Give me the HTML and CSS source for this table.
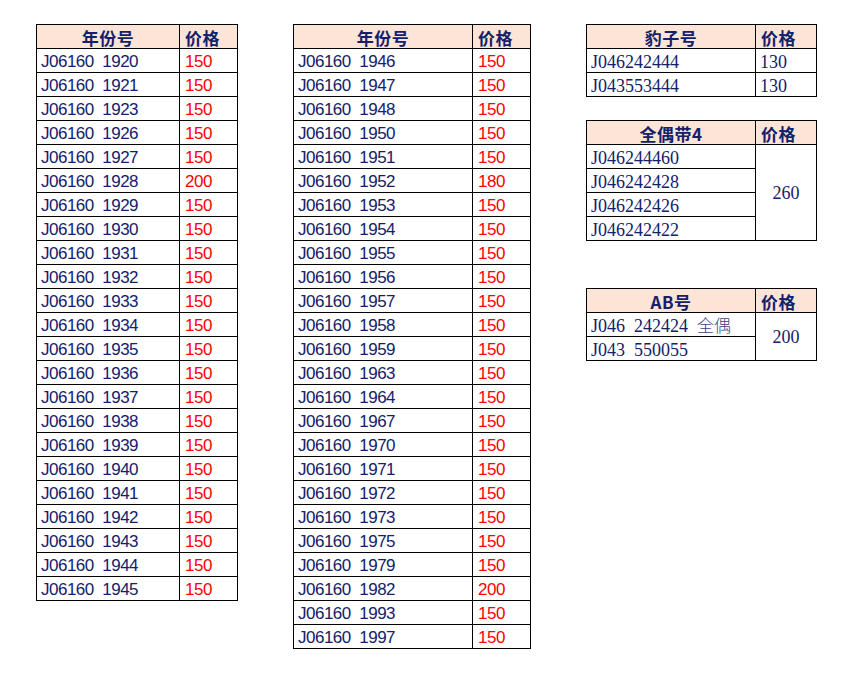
FILE: index.html
```html
<!DOCTYPE html>
<html lang="zh">
<head>
<meta charset="utf-8">
<link rel="stylesheet" href="styles.css">
</head>
<body>
<div class="sheet">
  <table class="tbl tbl-a">
    <colgroup><col class="c1"><col class="c2"></colgroup>
    <tr><th class="hd">年份号</th><th class="hd hd-l">价格</th></tr>
    <tr><td>J06160  1920</td><td class="red">150</td></tr>
    <tr><td>J06160  1921</td><td class="red">150</td></tr>
    <tr><td>J06160  1923</td><td class="red">150</td></tr>
    <tr><td>J06160  1926</td><td class="red">150</td></tr>
    <tr><td>J06160  1927</td><td class="red">150</td></tr>
    <tr><td>J06160  1928</td><td class="red">200</td></tr>
    <tr><td>J06160  1929</td><td class="red">150</td></tr>
    <tr><td>J06160  1930</td><td class="red">150</td></tr>
    <tr><td>J06160  1931</td><td class="red">150</td></tr>
    <tr><td>J06160  1932</td><td class="red">150</td></tr>
    <tr><td>J06160  1933</td><td class="red">150</td></tr>
    <tr><td>J06160  1934</td><td class="red">150</td></tr>
    <tr><td>J06160  1935</td><td class="red">150</td></tr>
    <tr><td>J06160  1936</td><td class="red">150</td></tr>
    <tr><td>J06160  1937</td><td class="red">150</td></tr>
    <tr><td>J06160  1938</td><td class="red">150</td></tr>
    <tr><td>J06160  1939</td><td class="red">150</td></tr>
    <tr><td>J06160  1940</td><td class="red">150</td></tr>
    <tr><td>J06160  1941</td><td class="red">150</td></tr>
    <tr><td>J06160  1942</td><td class="red">150</td></tr>
    <tr><td>J06160  1943</td><td class="red">150</td></tr>
    <tr><td>J06160  1944</td><td class="red">150</td></tr>
    <tr><td>J06160  1945</td><td class="red">150</td></tr>
  </table>

  <table class="tbl tbl-b">
    <colgroup><col class="c1"><col class="c2"></colgroup>
    <tr><th class="hd">年份号</th><th class="hd hd-l">价格</th></tr>
    <tr><td>J06160  1946</td><td class="red">150</td></tr>
    <tr><td>J06160  1947</td><td class="red">150</td></tr>
    <tr><td>J06160  1948</td><td class="red">150</td></tr>
    <tr><td>J06160  1950</td><td class="red">150</td></tr>
    <tr><td>J06160  1951</td><td class="red">150</td></tr>
    <tr><td>J06160  1952</td><td class="red">180</td></tr>
    <tr><td>J06160  1953</td><td class="red">150</td></tr>
    <tr><td>J06160  1954</td><td class="red">150</td></tr>
    <tr><td>J06160  1955</td><td class="red">150</td></tr>
    <tr><td>J06160  1956</td><td class="red">150</td></tr>
    <tr><td>J06160  1957</td><td class="red">150</td></tr>
    <tr><td>J06160  1958</td><td class="red">150</td></tr>
    <tr><td>J06160  1959</td><td class="red">150</td></tr>
    <tr><td>J06160  1963</td><td class="red">150</td></tr>
    <tr><td>J06160  1964</td><td class="red">150</td></tr>
    <tr><td>J06160  1967</td><td class="red">150</td></tr>
    <tr><td>J06160  1970</td><td class="red">150</td></tr>
    <tr><td>J06160  1971</td><td class="red">150</td></tr>
    <tr><td>J06160  1972</td><td class="red">150</td></tr>
    <tr><td>J06160  1973</td><td class="red">150</td></tr>
    <tr><td>J06160  1975</td><td class="red">150</td></tr>
    <tr><td>J06160  1979</td><td class="red">150</td></tr>
    <tr><td>J06160  1982</td><td class="red">200</td></tr>
    <tr><td>J06160  1993</td><td class="red">150</td></tr>
    <tr><td>J06160  1997</td><td class="red">150</td></tr>
  </table>

  <div class="side">
    <table class="tbl tbl-c serif">
      <colgroup><col class="c1"><col class="c2"></colgroup>
      <tr><th class="hd">豹子号</th><th class="hd hd-l">价格</th></tr>
      <tr><td>J046242444</td><td>130</td></tr>
      <tr><td>J043553444</td><td>130</td></tr>
    </table>

    <table class="tbl tbl-c serif gap-s">
      <colgroup><col class="c1"><col class="c2"></colgroup>
      <tr><th class="hd">全偶带4</th><th class="hd hd-l">价格</th></tr>
      <tr><td>J046244460</td><td class="merged" rowspan="4">260</td></tr>
      <tr><td>J046242428</td></tr>
      <tr><td>J046242426</td></tr>
      <tr><td>J046242422</td></tr>
    </table>

    <table class="tbl tbl-c serif gap-l">
      <colgroup><col class="c1"><col class="c2"></colgroup>
      <tr><th class="hd">AB号</th><th class="hd hd-l">价格</th></tr>
      <tr><td>J046  242424  <span class="note">全偶</span></td><td class="merged" rowspan="2">200</td></tr>
      <tr><td>J043  550055</td></tr>
    </table>
  </div>
</div>
</body>
</html>
```

FILE: styles.css
```css
html, body {
  margin: 0;
  padding: 0;
  background: #ffffff;
}

.sheet {
  display: flex;
  align-items: flex-start;
  gap: 55px;
  padding: 24px 0 0 36px;
}

.side {
  display: flex;
  flex-direction: column;
}

.gap-s { margin-top: 23px; }
.gap-l { margin-top: 47px; }

.tbl {
  border-collapse: separate;
  border-spacing: 0;
  border-top: 1px solid #000;
  border-left: 1px solid #000;
  table-layout: fixed;
  color: #14206a;
  font-family: "Liberation Sans Narrow", "Liberation Sans", "Noto Sans CJK SC", sans-serif;
  font-size: 17px;
}

.tbl th,
.tbl td {
  height: 23px;
  padding: 0 4px;
  border-right: 1px solid #000;
  border-bottom: 1px solid #000;
  vertical-align: bottom;
  line-height: 20px;
  white-space: pre;
  text-align: left;
  overflow: hidden;
}

.tbl-a td,
.tbl-b td {
  letter-spacing: -0.5px;
}

.tbl-a .c1 { width: 143px; }
.tbl-a .c2 { width: 58px; }
.tbl-b .c1 { width: 179px; }
.tbl-b .c2 { width: 58px; }
.tbl-c .c1 { width: 169px; }
.tbl-c .c2 { width: 61px; }

.tbl th.hd {
  background: #fce4d6;
  font-family: "Noto Sans CJK SC", sans-serif;
  font-weight: 700;
  font-size: 17px;
  text-align: center;
  color: #14206a;
  letter-spacing: 0.5px;
}

.tbl th.hd-l {
  text-align: left;
  padding-left: 5px;
}

.tbl td.red {
  color: #ff0000;
  padding-left: 5px;
}

.serif td {
  font-family: "Liberation Serif", "Noto Sans CJK SC", serif;
  font-size: 18px;
}

.tbl td.merged {
  text-align: center;
  vertical-align: middle;
}

.note {
  font-family: "Noto Sans CJK SC", sans-serif;
  font-weight: 300;
  font-size: 17px;
  color: #3a4680;
}
```
